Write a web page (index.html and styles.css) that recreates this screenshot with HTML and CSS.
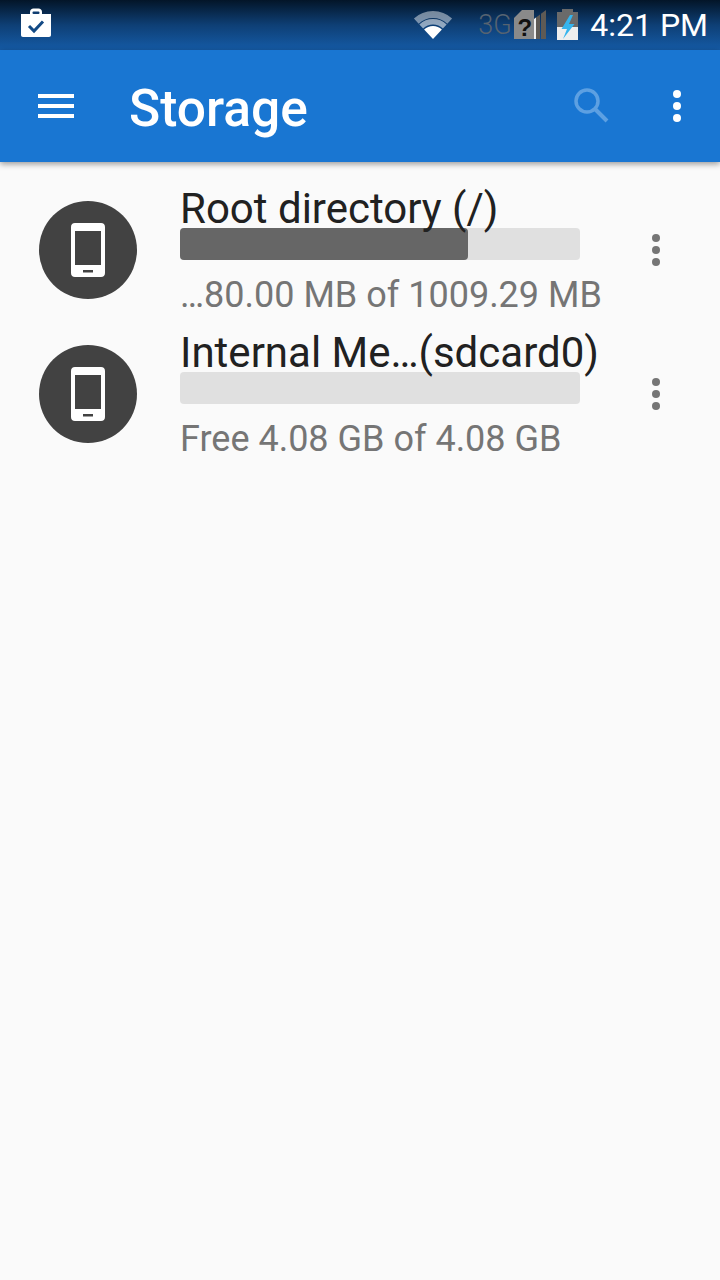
FILE: index.html
```html
<!DOCTYPE html>
<html lang="en">
<head>
  <meta charset="UTF-8">
  <meta name="viewport" content="width=device-width, initial-scale=1.0">
  <title>Storage</title>
  <link rel="stylesheet" href="styles.css">
</head>
<body>
  <!-- Status bar -->
  <div class="status-bar">
    <svg class="bag-icon" width="30" height="30" viewBox="0 0 30 30">
      <path fill="#fff" d="M0 6h9V4c0-2 1.500-3.500 3.500-3.500h5C19.500.5 21 2 21 4v2h9v21c0 1.200-.8 2-2 2H2c-1.200 0-2-.8-2-2z"/>
      <rect x="11.500" y="3.500" width="7" height="2.500" rx="1" fill="#0f3d70"/>
      <path fill="none" stroke="#134a85" stroke-width="3" d="M8 18l5 5 9-9.500"/>
    </svg>
    <div class="status-right">
      <svg class="wifi-icon" width="40" height="30" viewBox="0 0 40 30">
        <path fill="none" stroke="#fff" stroke-opacity=".45" stroke-width="7" d="M3.300 11.100A24.500 24.500 0 0 1 36.700 11.100"/>
        <path fill="none" stroke="#fff" stroke-opacity=".55" stroke-width="5.500" d="M8.240 16.400A17.250 17.250 0 0 1 31.760 16.400"/>
        <path fill="#fff" d="M20 29L11.100 19.500A13 13 0 0 1 28.900 19.500z"/>
      </svg>
      <span class="net-label">3G</span>
      <svg class="sim-icon" width="32" height="30" viewBox="0 0 32 30">
        <path fill="#8a8a8a" d="M0 8L8 0h12v29H0z"/>
        <path fill="#eee" d="M20 9l2-1.500V29h-2z"/>
        <path fill="#5e5a55" d="M22 7.500l4-3V29h-4zM27 3.700L32 0v29h-5z"/>
        <text x="3.500" y="26" class="sim-mark">?</text>
      </svg>
      <svg class="battery-icon" width="21" height="32" viewBox="0 0 21 32">
        <path fill="#6a6a6a" d="M5 0h11v3h5v28H0V3h5z"/>
        <rect x="0" y="18" width="21" height="13" fill="#eee"/>
        <path fill="#35b5ee" d="M13 6L4.500 20H10L6 30 17.500 15H12L16 6z"/>
      </svg>
      <span class="clock">4:21 PM</span>
    </div>
  </div>

  <!-- App bar -->
  <header class="app-bar">
    <div class="menu-icon"><span></span><span></span><span></span></div>
    <h1 class="app-title">Storage</h1>
    <svg class="search-icon" width="36" height="36" viewBox="0 0 36 36">
      <circle cx="13" cy="13" r="11" fill="none" stroke="#5da0e2" stroke-width="3.500"/>
      <path d="M20.500 20.500L33 33" stroke="#5da0e2" stroke-width="4" fill="none"/>
    </svg>
    <div class="dots dots-white"><span></span><span></span><span></span></div>
  </header>

  <!-- Storage list -->
  <main class="storage-list">
    <div class="storage-row">
      <div class="device-badge">
        <svg width="34" height="54" viewBox="0 0 34 54">
          <path fill="#fff" fill-rule="evenodd" d="M4 0h26c2.500 0 4 1.500 4 4v46c0 2.500-1.500 4-4 4H4c-2.500 0-4-1.500-4-4V4c0-2.500 1.500-4 4-4zM4 8v34h26V8zM12 47v2.500h10V47z"/>
        </svg>
      </div>
      <div class="storage-info">
        <div class="storage-name">Root directory (/)</div>
        <div class="usage-bar"><div class="usage-fill" style="width: 72%"></div></div>
        <div class="storage-free">…80.00 MB of 1009.29 MB</div>
      </div>
      <div class="dots dots-grey"><span></span><span></span><span></span></div>
    </div>

    <div class="storage-row">
      <div class="device-badge">
        <svg width="34" height="54" viewBox="0 0 34 54">
          <path fill="#fff" fill-rule="evenodd" d="M4 0h26c2.500 0 4 1.500 4 4v46c0 2.500-1.500 4-4 4H4c-2.500 0-4-1.500-4-4V4c0-2.500 1.500-4 4-4zM4 8v34h26V8zM12 47v2.500h10V47z"/>
        </svg>
      </div>
      <div class="storage-info">
        <div class="storage-name">Internal Me…(sdcard0)</div>
        <div class="usage-bar"></div>
        <div class="storage-free">Free 4.08 GB of 4.08 GB</div>
      </div>
      <div class="dots dots-grey"><span></span><span></span><span></span></div>
    </div>
  </main>
</body>
</html>
```

FILE: styles.css
```css
* {
  box-sizing: border-box;
}

html, body {
  height: 100%;
}

body {
  margin: 0;
  background-color: #fafafa;
  font-family: Roboto, "Liberation Sans", sans-serif;
  overflow: hidden;
}

.status-bar {
  height: 50px;
  padding: 8px 12px 0 21px;
  display: flex;
  justify-content: space-between;
  align-items: flex-start;
  background: linear-gradient(180deg, #031528 0%, #0e3f75 50%, #155ba6 100%);
}

.status-right {
  display: flex;
  align-items: center;
  height: 34px;
}

.wifi-icon {
  margin-right: 25px;
}

.net-label {
  width: 36px;
  font-size: 27px;
  font-weight: 300;
  color: #566371;
}

.sim-icon {
  margin-right: 11px;
}

.battery-icon {
  margin-right: 12px;
}

.sim-mark {
  font-family: "Liberation Sans", sans-serif;
  font-size: 24px;
  font-weight: 700;
  fill: #111;
}

.clock {
  font-size: 32px;
  color: #fff;
}

.app-bar {
  height: 112px;
  padding: 0 39px 0 38px;
  display: flex;
  align-items: center;
  background-color: #1976d2;
  box-shadow: 0 2px 6px rgba(0, 0, 0, 0.4);
  position: relative;
}

.menu-icon {
  width: 36px;
  display: flex;
  flex-direction: column;
  gap: 6px;
}

.menu-icon span {
  height: 4px;
  background: #fff;
}

.app-title {
  margin: 0 0 0 55px;
  padding-top: 4px;
  flex: 1;
  font-size: 51.5px;
  font-weight: 500;
  color: #fff;
}

.search-icon {
  margin-right: 63px;
}

.dots {
  display: flex;
  flex-direction: column;
  gap: 4px;
}

.dots span {
  width: 8px;
  height: 8px;
  border-radius: 50%;
}

.dots-white span {
  background: #fff;
}

.dots-grey span {
  background: #757575;
}

.storage-list {
  padding-top: 16px;
}

.storage-row {
  height: 144px;
  padding: 0 60px 0 39px;
  display: flex;
  align-items: center;
}

.device-badge {
  width: 98px;
  height: 98px;
  border-radius: 50%;
  background: #424242;
  display: flex;
  align-items: center;
  justify-content: center;
  flex-shrink: 0;
}

.storage-info {
  margin-left: 43px;
  padding-top: 2px;
  width: 400px;
  flex-shrink: 0;
}

.storage-name {
  font-size: 42px;
  line-height: 44px;
  color: #212121;
  white-space: nowrap;
  margin-bottom: -3px;
}

.usage-bar {
  height: 32px;
  border-radius: 4px;
  background: #e0e0e0;
}

.usage-fill {
  height: 100%;
  border-radius: 4px;
  background: #666;
}

.storage-free {
  margin-top: 15px;
  font-size: 36px;
  line-height: 40px;
  color: #757575;
  white-space: nowrap;
}

.storage-row .dots {
  margin-left: 72px;
}
```
